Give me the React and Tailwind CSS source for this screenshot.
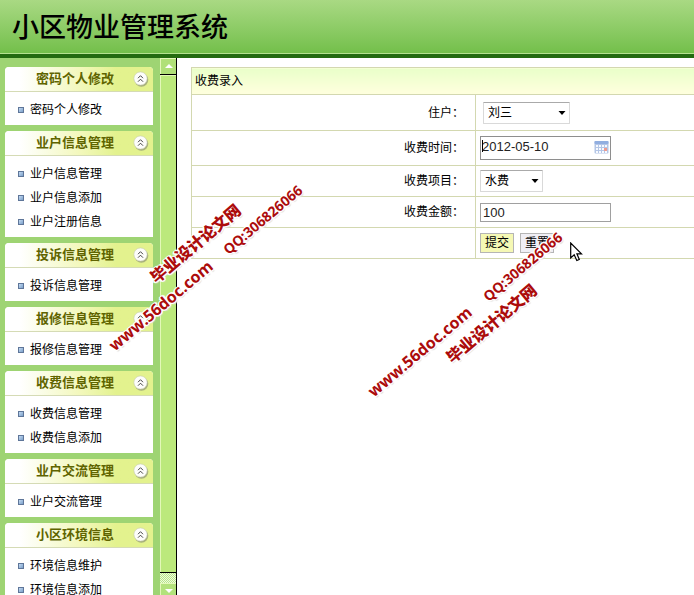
import { useState } from "react";

const menuGroups = [
  { title: "密码个人修改", items: ["密码个人修改"] },
  { title: "业户信息管理", items: ["业户信息管理", "业户信息添加", "业户注册信息"] },
  { title: "投诉信息管理", items: ["投诉信息管理"] },
  { title: "报修信息管理", items: ["报修信息管理"] },
  { title: "收费信息管理", items: ["收费信息管理", "收费信息添加"] },
  { title: "业户交流管理", items: ["业户交流管理"] },
  { title: "小区环境信息", items: ["环境信息维护", "环境信息添加"] },
];

function CollapseIcon() {
  return (
    <svg width="16" height="16" viewBox="0 0 16 16" aria-hidden="true">
      <circle cx="8.4" cy="8.8" r="6.9" fill="#8f9675" opacity="0.7" />
      <circle cx="7.5" cy="7.5" r="6.6" fill="#fdfdfb" stroke="#c9cfb4" strokeWidth="0.6" />
      <path d="M5 7.2 L7.5 4.7 L10 7.2 M5 10.700 L7.5 8.2 L10 10.700" fill="none" stroke="#333" strokeWidth="0.9" />
    </svg>
  );
}

function MenuGroup({ title, items }) {
  const [open, setOpen] = useState(true);

  return (
    <section className="overflow-hidden rounded-t bg-white">
      <button
        type="button"
        aria-expanded={open}
        onClick={() => setOpen(!open)}
        className="relative block h-[25px] w-full border-b border-[#d5dbb5] bg-linear-to-r from-white from-10% via-[#f3f8bd] via-50% to-[#e3f28e] to-75% pr-2 text-center text-[13px] leading-6 font-bold text-[#5f6400]"
      >
        {title}
        <span className="absolute top-1 right-1">
          <CollapseIcon />
        </span>
      </button>
      {open && (
        <ul className="pt-[6px] pb-[3px]">
          {items.map((item) => (
            <li key={item} className="flex h-6 items-center gap-[6px] pl-[13px]">
              <span className="size-[6px] border border-[#5f7699] bg-linear-to-br from-[#c5dcf3] to-[#7b9fc9]" />
              <a href="#" className="text-black">{item}</a>
            </li>
          ))}
        </ul>
      )}
    </section>
  );
}

function Scrollbar() {
  return (
    <div className="flex w-[17px] shrink-0 flex-col border-r border-black bg-[#bce97c]">
      <div className="flex h-4 justify-center border-t border-l border-[#e3f8b8] bg-[#b0e078] pt-[5px]">
        <svg width="8" height="4" viewBox="0 0 8 4"><path d="M4 0 L8 4 H0 Z" fill="#fff" /></svg>
      </div>
      <div className="border-t border-black" />
      <div className="grow border-t border-l border-[#e3f8b8]" />
      <div className="border-t border-black" />
      <div className="h-[10px] bg-[repeating-conic-gradient(#b9e58a_0_25%,#eefbdc_0_50%)] bg-[length:2px_2px]" />
      <div className="flex h-3 justify-center border-t border-l border-[#e3f8b8] bg-[#b3e27b] pt-[5px]">
        <svg width="8" height="4" viewBox="0 0 8 4"><path d="M0 0 H8 L4 4 Z" fill="#fff" /></svg>
      </div>
    </div>
  );
}

function Row({ id, label, height, children }) {
  return (
    <tr className={height}>
      <th scope="row" className="w-[284px] border border-[#d3d8b0] pr-[11px] text-right font-normal">
        {label && <label htmlFor={id}>{label}</label>}
      </th>
      <td className="border-y border-[#d3d8b0] pl-1">{children}</td>
    </tr>
  );
}

function Select({ id, options, width }) {
  return (
    <span className="relative inline-block align-middle">
      <select
        id={id}
        className={`${width} h-[22px] appearance-none rounded-[1px] border border-[#d9d9d9] border-t-[#aaaaaa] bg-white pl-1 text-xs leading-5 text-black outline-none`}
      >
        {options.map((option) => (
          <option key={option}>{option}</option>
        ))}
      </select>
      <svg width="8" height="5" viewBox="0 0 8 5" className="pointer-events-none absolute top-[9px] right-1">
        <path d="M0.5 0 H7.5 L4 4 Z" fill="#000" />
      </svg>
    </span>
  );
}

function CalendarIcon() {
  return (
    <svg width="15" height="14" viewBox="0 0 15 14" aria-hidden="true">
      <rect x="0.5" y="1" width="14" height="12.5" rx="1" fill="#b4c6e6" />
      <rect x="0.5" y="1" width="14" height="3" rx="1" fill="#91aee0" />
      <g fill="#f7faff">
        <path d="M2 5h2v2H2zM5 5h2v2H5zM8 5h2v2H8zM11 5h2v2h-2z" />
        <path d="M2 8h2v2H2zM5 8h2v2H5zM8 8h2v2H8z" />
        <path d="M2 11h2v2H2zM5 11h2v2H5zM8 11h2v2H8zM11 11h2v2h-2z" />
      </g>
      <path d="M10 8h3v3h-3z" fill="#ef9b8f" />
    </svg>
  );
}

function Stamp({ place, children }) {
  return (
    <span
      className={`${place} pointer-events-none absolute -translate-x-1/2 -translate-y-1/2 -rotate-40 whitespace-nowrap font-['Noto_Sans','Noto_Sans_CJK_SC',sans-serif] text-[#ac0c0c] [text-shadow:1px_1px_0_#fff,-1px_-1px_0_#fff,1px_-1px_0_#fff,-1px_1px_0_#fff,2px_0_0_#fff,-2px_0_0_#fff,0_2px_1px_#ddd]`}
    >
      {children}
    </span>
  );
}

export default function App() {
  const [date, setDate] = useState("2012-05-10");
  const [amount, setAmount] = useState("100");

  return (
    <div className="relative flex h-screen flex-col overflow-hidden bg-white font-['Liberation_Sans','Noto_Sans_CJK_SC',sans-serif] text-xs text-black">
      <header className="flex h-[58px] shrink-0 items-center border-b-4 border-[#236b10] bg-linear-to-b from-[#a9d983] to-[#72bf49] pt-[3px] pl-3 shadow-[inset_0_-1px_0_#b4e28f]">
        <h1 className="text-[27px] leading-none font-medium">小区物业管理系统</h1>
      </header>

      <div className="flex min-h-0 grow">
        <nav className="flex w-40 shrink-0 flex-col gap-[6px] overflow-hidden bg-[#9ed473] pt-[9px] pr-[7px] pl-[5px] *:shrink-0">
          {menuGroups.map((group) => (
            <MenuGroup key={group.title} {...group} />
          ))}
        </nav>
        <Scrollbar />

        <main className="grow pt-[9px] pl-[14px]">
          <form onSubmit={(e) => e.preventDefault()}>
            <table className="w-full border-collapse">
              <thead>
                <tr className="h-[27px]">
                  <th
                    colSpan={2}
                    className="border border-r-0 border-[#d3d8b0] bg-linear-to-b from-[#e9ffc9] to-[#ffffde] pl-[3px] text-left font-normal"
                  >
                    收费录入
                  </th>
                </tr>
              </thead>
              <tbody>
                <Row id="owner" label="住户：" height="h-9">
                  <span className="pl-[3px]">
                    <Select id="owner" width="w-[87px]" options={["刘三"]} />
                  </span>
                </Row>
                <Row id="date" label="收费时间：" height="h-[35px]">
                  <span className="relative block w-[131px]">
                    <input
                      id="date"
                      type="text"
                      value={date}
                      onChange={(e) => setDate(e.target.value)}
                      className="block h-6 w-full border border-[#8e8e8e] bg-white pb-1 pl-px text-[13px] text-[#222] outline-none"
                    />
                    <span className="absolute top-1 left-[2px] h-3 w-px bg-black" />
                    <span className="pointer-events-none absolute top-1 right-[2px]">
                      <CalendarIcon />
                    </span>
                  </span>
                </Row>
                <Row id="item" label="收费项目：" height="h-[31px]">
                  <Select id="item" width="w-[63px]" options={["水费"]} />
                </Row>
                <Row id="amount" label="收费金额：" height="h-[31px]">
                  <input
                    id="amount"
                    type="text"
                    value={amount}
                    onChange={(e) => setAmount(e.target.value)}
                    className="block h-[19px] w-[131px] border border-[#a0a0a0] bg-white pl-[2px] text-[13px] text-[#222] outline-none"
                  />
                </Row>
                <Row height="h-[31px]">
                  <div className="flex gap-[6px]">
                    <button type="submit" className="h-5 w-[34px] border border-[#b5b5b5] bg-[#f5f8b4] leading-none">
                      提交
                    </button>
                    <button type="reset" className="h-5 w-[34px] border border-[#b5b5b5] bg-[#f0eff5] leading-none">
                      重置
                    </button>
                  </div>
                </Row>
              </tbody>
            </table>
          </form>
        </main>
      </div>

      <Stamp place="left-[196px] top-[244px]">
        <b className="text-[16px] font-black">毕业设计论文网</b>
      </Stamp>
      <Stamp place="left-[161px] top-[306px]">
        <b className="text-[16px]">www.56doc.com</b>
      </Stamp>
      <Stamp place="left-[263px] top-[220px]">
        <b className="text-[14px]">QQ:306826066</b>
      </Stamp>
      <Stamp place="left-[492px] top-[324px]">
        <b className="text-[16px] font-black">毕业设计论文网</b>
      </Stamp>
      <Stamp place="left-[420px] top-[352px]">
        <b className="text-[16px]">www.56doc.com</b>
      </Stamp>
      <Stamp place="left-[523px] top-[267px]">
        <b className="text-[14px]">QQ:306826066</b>
      </Stamp>

      {/* mouse pointer */}
      <svg width="13" height="20" viewBox="0 0 13 20" className="pointer-events-none absolute top-[242px] left-[570px]">
        <path
          d="M0.7 1 V16 L4.2 12.8 L6.8 18.5 L9.3 17.5 L6.9 11.8 H11.5 Z"
          fill="#fff"
          stroke="#000"
          strokeWidth="1.2"
        />
      </svg>
    </div>
  );
}
